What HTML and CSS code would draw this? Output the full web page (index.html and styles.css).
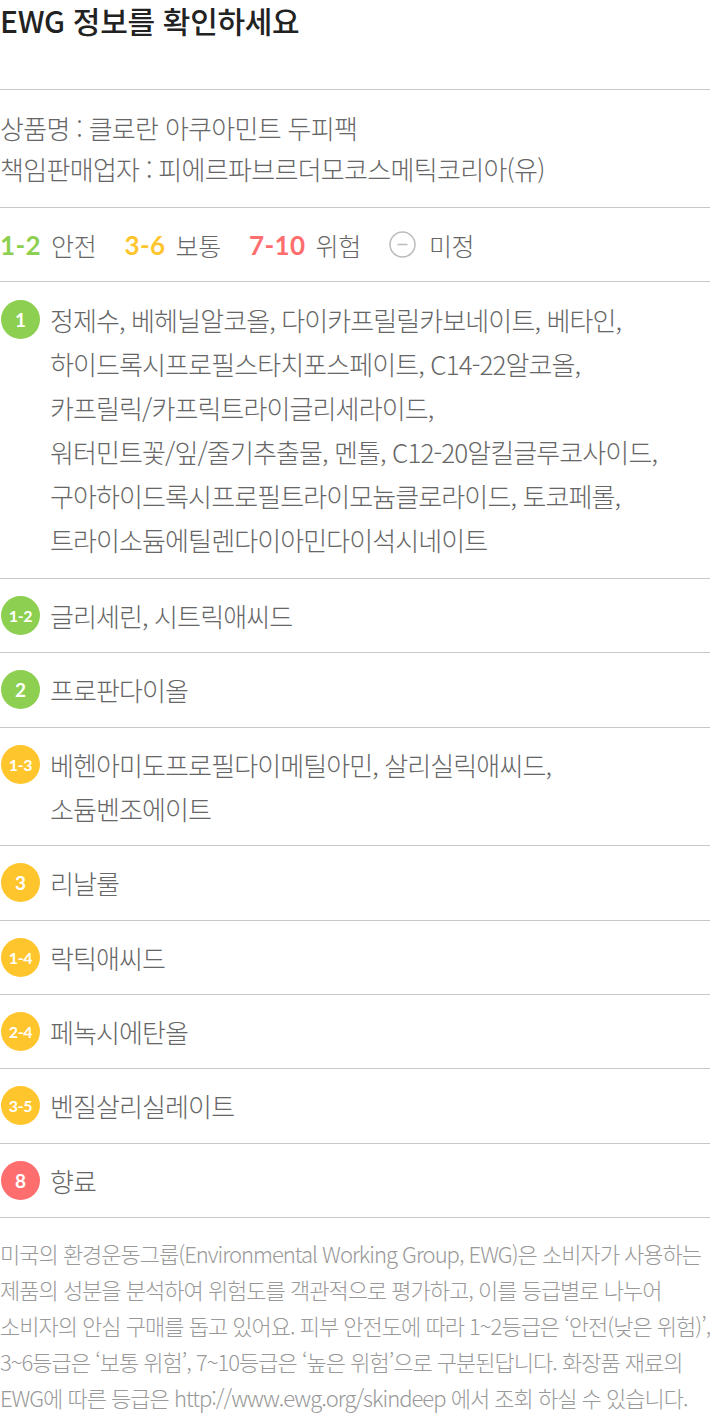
FILE: index.html
```html
<!DOCTYPE html>
<html lang="ko">
<head>
<meta charset="UTF-8">
<meta name="viewport" content="width=device-width, initial-scale=1.0">
<link rel="stylesheet" href="styles.css">
</head>
<body>
    <!-- Title -->
    <h1 class="title">EWG 정보를 확인하세요</h1>

    <!-- Product info -->
    <div class="product-info">
        <p>상품명 : 클로란 아쿠아민트 두피팩</p>
        <p>책임판매업자 : 피에르파브르더모코스메틱코리아(유)</p>
    </div>

    <!-- Legend -->
    <div class="legend">
        <span class="legend-item"><b class="green">1-2</b> 안전</span>
        <span class="legend-item"><b class="yellow">3-6</b> 보통</span>
        <span class="legend-item"><b class="red">7-10</b> 위험</span>
        <span class="legend-item">
            <svg class="minus-icon" width="27" height="27" viewBox="0 0 27 27">
                <circle cx="13.5" cy="13.5" r="12.5" fill="none" stroke="#bbb" stroke-width="1.5"/>
                <line x1="8.5" y1="13.5" x2="18.5" y2="13.5" stroke="#bbb" stroke-width="1.5"/>
            </svg>
            미정
        </span>
    </div>

    <!-- Ingredients -->
    <ul class="ingredient-list">
        <li class="ingredient">
            <span class="badge green-bg">1</span>
            <span class="names">정제수, 베헤닐알코올, 다이카프릴릴카보네이트, 베타인,<br>하이드록시프로필스타치포스페이트, C14-22알코올,<br>카프릴릭/카프릭트라이글리세라이드,<br>워터민트꽃/잎/줄기추출물, 멘톨, C12-20알킬글루코사이드,<br>구아하이드록시프로필트라이모늄클로라이드, 토코페롤,<br>트라이소듐에틸렌다이아민다이석시네이트</span>
        </li>
        <li class="ingredient">
            <span class="badge green-bg small">1-2</span>
            <span class="names">글리세린, 시트릭애씨드</span>
        </li>
        <li class="ingredient">
            <span class="badge green-bg">2</span>
            <span class="names">프로판다이올</span>
        </li>
        <li class="ingredient">
            <span class="badge yellow-bg small">1-3</span>
            <span class="names">베헨아미도프로필다이메틸아민, 살리실릭애씨드,<br>소듐벤조에이트</span>
        </li>
        <li class="ingredient">
            <span class="badge yellow-bg">3</span>
            <span class="names">리날룰</span>
        </li>
        <li class="ingredient">
            <span class="badge yellow-bg small">1-4</span>
            <span class="names">락틱애씨드</span>
        </li>
        <li class="ingredient">
            <span class="badge yellow-bg small">2-4</span>
            <span class="names">페녹시에탄올</span>
        </li>
        <li class="ingredient">
            <span class="badge yellow-bg small">3-5</span>
            <span class="names">벤질살리실레이트</span>
        </li>
        <li class="ingredient">
            <span class="badge red-bg">8</span>
            <span class="names">향료</span>
        </li>
    </ul>

    <!-- Notice -->
    <p class="notice">미국의 환경운동그룹(Environmental Working Group, EWG)은 소비자가 사용하는<br>제품의 성분을 분석하여 위험도를 객관적으로 평가하고, 이를 등급별로 나누어<br>소비자의 안심 구매를 돕고 있어요. 피부 안전도에 따라 1~2등급은 ‘안전(낮은 위험)’,<br>3~6등급은 ‘보통 위험’, 7~10등급은 ‘높은 위험’으로 구분된답니다. 화장품 재료의<br>EWG에 따른 등급은 http://www.ewg.org/skindeep 에서 조회 하실 수 있습니다.</p>
</body>
</html>
```

FILE: styles.css
```css
body, html {
    margin: 0;
    padding: 0;
    background-color: #fff;
    font-family: "Noto Sans CJK KR", "Noto Sans", sans-serif;
    color: #666;
}

.title {
    margin: 0;
    padding: 0;
    height: 89px;
    font-size: 30px;
    font-weight: 500;
    line-height: 40px;
    color: #222;
    letter-spacing: -0.3px;
    border-bottom: 1px solid #c8c8c8;
}

/* Product info */
.product-info {
    padding: 17px 0 18px;
    border-bottom: 1px solid #c8c8c8;
}

.product-info p {
    margin: 0;
    font-size: 26px;
    font-weight: 300;
    line-height: 41px;
    letter-spacing: -0.7px;
}

/* Legend */
.legend {
    display: flex;
    align-items: center;
    height: 73px;
    border-bottom: 1px solid #c8c8c8;
    font-size: 25px;
    font-weight: 300;
    letter-spacing: -0.3px;
}

.legend-item {
    display: flex;
    align-items: center;
    gap: 10px;
    margin-right: 28px;
}

.legend-item b {
    font-family: "Lato", sans-serif;
    font-weight: 700;
    font-size: 26px;
    letter-spacing: 0.4px;
}

.green { color: #8dcf50; }
.yellow { color: #ffc52d; }
.red { color: #ff6e6e; }

.minus-icon {
    margin-right: 3px;
}

/* Ingredient list */
.ingredient-list {
    list-style: none;
    margin: 0;
    padding: 0;
}

.ingredient {
    display: flex;
    align-items: flex-start;
    padding: 15px 0 14.4px;
    border-bottom: 1px solid #c8c8c8;
}

.ingredient:first-child {
    padding: 16px 0 16px;
}

.badge {
    flex: none;
    display: flex;
    align-items: center;
    justify-content: center;
    width: 39px;
    height: 39px;
    margin: 2px 10px 0 1px;
    border-radius: 50%;
    color: #fff;
    font-family: "Lato", sans-serif;
    font-weight: 700;
    font-size: 19px;
}

.badge.small {
    font-size: 16px;
    letter-spacing: -0.3px;
}

.green-bg { background-color: #8dcf50; }
.yellow-bg { background-color: #ffc52d; }
.red-bg { background-color: #ff6e6e; }

.names {
    font-size: 26px;
    font-weight: 300;
    line-height: 44px;
    letter-spacing: -0.9px;
}

/* Notice */
.notice {
    margin: 0;
    padding: 17px 0 0;
    font-size: 22px;
    font-weight: 300;
    line-height: 36px;
    color: #999;
    letter-spacing: -1px;
    white-space: nowrap;
}
```
